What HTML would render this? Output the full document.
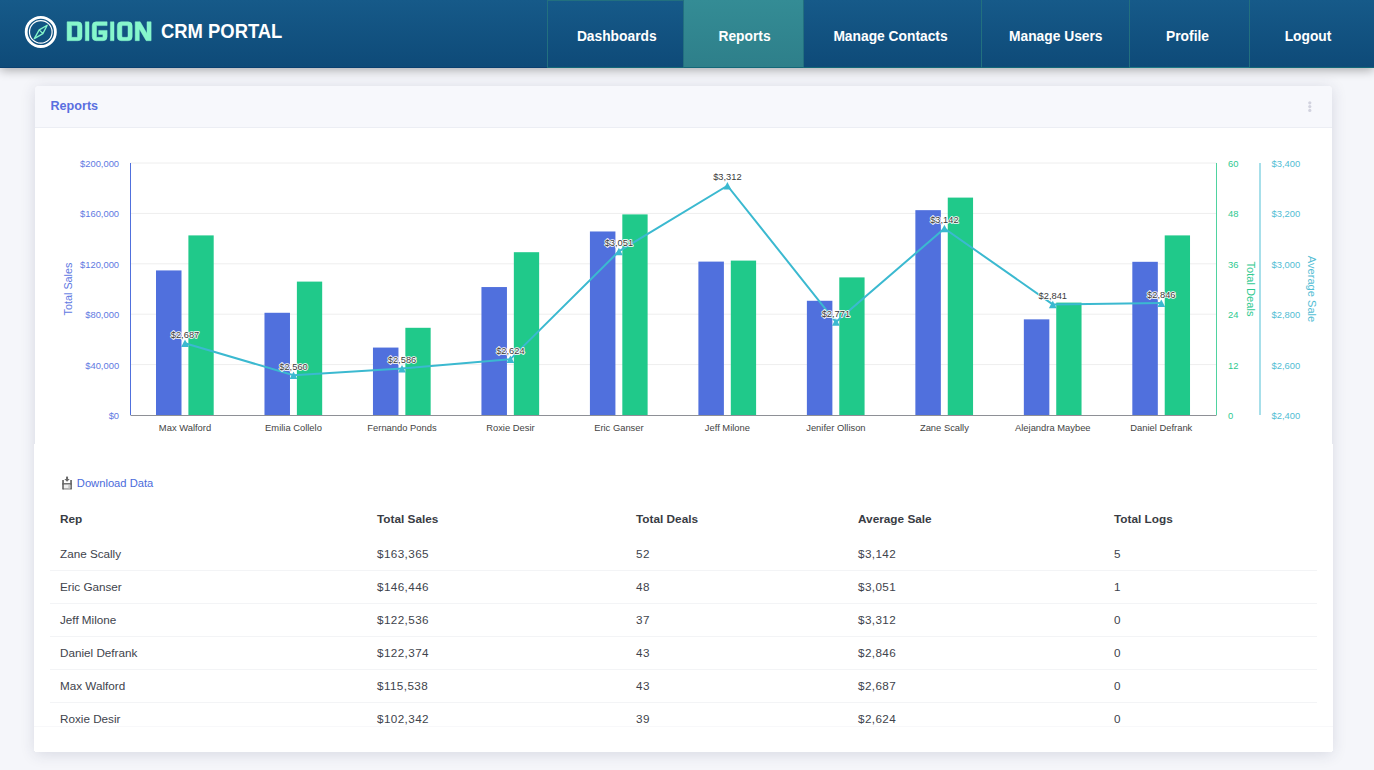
<!DOCTYPE html>
<html><head><meta charset="utf-8">
<style>
*{box-sizing:border-box;margin:0;padding:0}
html,body{width:1374px;height:770px;overflow:hidden;background:#f5f6fa;font-family:"Liberation Sans",sans-serif}
.hdr{position:absolute;left:0;top:0;width:1374px;height:68px;background:linear-gradient(#165a89,#0e4a78);box-shadow:inset 0 -1px #0a406f,0 2px 10px rgba(0,0,0,.33);z-index:5}
.logo{position:absolute;left:0;top:0}
.brand{position:absolute;left:65px;top:18px;font-size:28px;font-weight:bold;color:#85f6ca;line-height:1;transform-origin:0 0;transform:scaleX(.86);letter-spacing:0}
.crm{position:absolute;left:161px;top:21px;font-size:20.5px;font-weight:bold;color:#fff;line-height:1;transform-origin:0 0;transform:scaleX(.898)}
.nav{position:absolute;top:0;height:68px;border-left:1px solid #22707f;border-bottom:1px solid #136878;color:#fff;font-weight:bold;font-size:13.8px;text-align:center;line-height:1}
.nav span{position:absolute;left:0;right:0;top:30px}
.nav.act{background:linear-gradient(#348c95,#2e7f8a)}
.card{position:absolute;left:35px;top:86px;width:1297px;height:666px;background:#fff;border-radius:4px 4px 0 0;box-shadow:0 2px 15px rgba(40,50,90,.15);z-index:1}
.chd{position:absolute;left:0;top:0;width:100%;height:42px;background:#f7f8fc;border-bottom:1px solid #eceef4;border-radius:4px 4px 0 0}
.ttl{position:absolute;left:15.5px;top:13.5px;font-size:12.6px;font-weight:bold;color:#5a6fe0;line-height:1}
.keb{position:absolute;left:1272.5px;top:15px}
svg.chart{position:absolute;left:0;top:0;z-index:2}
svg text{font-family:"Liberation Sans",sans-serif}
.dl{position:absolute;left:76.8px;top:477.5px;font-size:11.2px;color:#4b6bdb;line-height:1;z-index:2}
.th,.td{position:absolute;line-height:1;z-index:2;white-space:nowrap}
.th{font-size:11.8px;font-weight:bold;color:#393c44}
.td{font-size:11.7px;color:#40434c}
.hr{position:absolute;left:50px;width:1267px;height:1px;background:#f3f4f6;z-index:2}
.ext{position:absolute;top:444px;height:307px;width:1px;background:#fff;z-index:1}
.clip{position:absolute;left:34px;top:726px;width:1299px;height:25px;background:#fff;z-index:3;border-top:1px solid #f8f8fa}
</style></head><body>
<div class="hdr">
<svg class="logo" width="80" height="68">
<circle cx="40.8" cy="31.9" r="14.6" fill="none" stroke="#fff" stroke-width="2.8"/>
<circle cx="40.8" cy="31.9" r="11.3" fill="none" stroke="#fff" stroke-width="1.2"/>
<path d="M34.3 38.6 L39.2 29.9 L47.2 25.3 L42.9 33.6 Z M39.2 29.9 L42.9 33.6" fill="none" stroke="#85f6ca" stroke-width="1.3" stroke-linejoin="round"/>
</svg>
<svg style="position:absolute;left:0;top:0" width="160" height="68"><g fill="#86f7cc" fill-rule="evenodd" stroke="#86f7cc" stroke-width="0.5" stroke-linejoin="round">
<path d="M67.1 21.8 H78 Q82 21.8 82 25.8 V36.7 Q82 40.7 78 40.7 H67.1 Z M71.6 25.6 H76.6 Q77.5 25.6 77.5 26.5 V36.4 Q77.5 37.3 76.6 37.3 H71.6 Z"/>
<path d="M85.3 21.8 H89 V40.7 H85.3 Z"/>
<path d="M92.2 25.8 Q92.2 21.8 96.2 21.8 H107.1 V25.6 H96.5 V37.3 H102.9 V34.4 H98.7 V30.4 H107.1 V36.7 Q107.1 40.7 103.1 40.7 H96.2 Q92.2 40.7 92.2 36.7 Z"/>
<path d="M110.4 21.8 H114 V40.7 H110.4 Z"/>
<path d="M117.3 25.8 Q117.3 21.8 121.3 21.8 H128.2 Q132.2 21.8 132.2 25.8 V36.7 Q132.2 40.7 128.2 40.7 H121.3 Q117.3 40.7 117.3 36.7 Z M121.9 26.6 Q121.9 25.6 122.9 25.6 H127 Q128 25.6 128 26.6 V36.3 Q128 37.3 127 37.3 H122.9 Q121.9 37.3 121.9 36.3 Z"/>
<path d="M135.2 21.8 H140.2 L147 33.6 V21.8 H151.1 V40.7 H146.2 L139.3 28.9 V40.7 H135.2 Z"/>
</g></svg>
<div class="crm">CRM PORTAL</div>
<div class="nav" style="left:547px;width:136px;border-top:1px solid #22707f"><i></i><span style="left:2.5px;top:29px">Dashboards</span></div>
<div class="nav act" style="left:683px;width:121px"><span style="left:1px">Reports</span></div>
<div class="nav" style="left:803px;width:178px"><span style="left:-4px">Manage Contacts</span></div>
<div class="nav" style="left:981px;width:148px"><span style="left:0.5px">Manage Users</span></div>
<div class="nav" style="left:1129px;width:121px;border-right:1px solid #22707f;border-bottom:1px solid #1f7a86"><span style="left:-4px">Profile</span></div>
<div class="nav" style="left:1250px;width:124px;border-left:none"><span style="left:-8px">Logout</span></div>
</div>
<div class="card">
<div class="chd"><div class="ttl">Reports</div>
<svg class="keb" width="4" height="14"><circle cx="1.8" cy="1.8" r="1.6" fill="#d2d3df"/><circle cx="1.8" cy="5.6" r="1.6" fill="#d2d3df"/><circle cx="1.8" cy="9.4" r="1.6" fill="#d2d3df"/></svg>
</div>
</div>
<svg class="chart" width="1374" height="770">
<line x1="130.5" y1="163.0" x2="1216.5" y2="163.0" stroke="#eeeeee" stroke-width="1"/>
<line x1="130.5" y1="213.4" x2="1216.5" y2="213.4" stroke="#eeeeee" stroke-width="1"/>
<line x1="130.5" y1="263.8" x2="1216.5" y2="263.8" stroke="#eeeeee" stroke-width="1"/>
<line x1="130.5" y1="314.2" x2="1216.5" y2="314.2" stroke="#eeeeee" stroke-width="1"/>
<line x1="130.5" y1="364.6" x2="1216.5" y2="364.6" stroke="#eeeeee" stroke-width="1"/>
<rect x="156.00" y="270.42" width="25.5" height="144.58" fill="#5070dd"/>
<rect x="188.40" y="235.40" width="25.3" height="179.60" fill="#20c98a"/>
<rect x="264.48" y="312.78" width="25.5" height="102.22" fill="#5070dd"/>
<rect x="296.88" y="281.60" width="25.3" height="133.40" fill="#20c98a"/>
<rect x="372.96" y="347.57" width="25.5" height="67.43" fill="#5070dd"/>
<rect x="405.36" y="327.80" width="25.3" height="87.20" fill="#20c98a"/>
<rect x="481.44" y="287.05" width="25.5" height="127.95" fill="#5070dd"/>
<rect x="513.84" y="252.20" width="25.3" height="162.80" fill="#20c98a"/>
<rect x="589.92" y="231.48" width="25.5" height="183.52" fill="#5070dd"/>
<rect x="622.32" y="214.40" width="25.3" height="200.60" fill="#20c98a"/>
<rect x="698.40" y="261.60" width="25.5" height="153.40" fill="#5070dd"/>
<rect x="730.80" y="260.60" width="25.3" height="154.40" fill="#20c98a"/>
<rect x="806.88" y="300.78" width="25.5" height="114.22" fill="#5070dd"/>
<rect x="839.28" y="277.40" width="25.3" height="137.60" fill="#20c98a"/>
<rect x="915.36" y="210.16" width="25.5" height="204.84" fill="#5070dd"/>
<rect x="947.76" y="197.60" width="25.3" height="217.40" fill="#20c98a"/>
<rect x="1023.84" y="319.35" width="25.5" height="95.65" fill="#5070dd"/>
<rect x="1056.24" y="302.60" width="25.3" height="112.40" fill="#20c98a"/>
<rect x="1132.32" y="261.81" width="25.5" height="153.19" fill="#5070dd"/>
<rect x="1164.72" y="235.40" width="25.3" height="179.60" fill="#20c98a"/>
<line x1="130.5" y1="163.0" x2="130.5" y2="415.0" stroke="#5070dd" stroke-width="1"/>
<line x1="1216.5" y1="163.0" x2="1216.5" y2="415.0" stroke="#4fd3a0" stroke-width="1"/>
<line x1="1260" y1="163.0" x2="1260" y2="415.0" stroke="#3bb9d0" stroke-opacity="0.45" stroke-width="2"/>
<line x1="130.5" y1="415.5" x2="1216.5" y2="415.5" stroke="#8e9096" stroke-width="1"/>
<text x="119.1" y="418.9" text-anchor="end" font-size="9.4" fill="#5f7ae2">$0</text>
<text x="1228" y="418.9" font-size="9.4" fill="#2ec990">0</text>
<text x="1271.5" y="418.9" font-size="9.4" fill="#52bdd4">$2,400</text>
<text x="119.1" y="368.5" text-anchor="end" font-size="9.4" fill="#5f7ae2">$40,000</text>
<text x="1228" y="368.5" font-size="9.4" fill="#2ec990">12</text>
<text x="1271.5" y="368.5" font-size="9.4" fill="#52bdd4">$2,600</text>
<text x="119.1" y="318.1" text-anchor="end" font-size="9.4" fill="#5f7ae2">$80,000</text>
<text x="1228" y="318.1" font-size="9.4" fill="#2ec990">24</text>
<text x="1271.5" y="318.1" font-size="9.4" fill="#52bdd4">$2,800</text>
<text x="119.1" y="267.7" text-anchor="end" font-size="9.4" fill="#5f7ae2">$120,000</text>
<text x="1228" y="267.7" font-size="9.4" fill="#2ec990">36</text>
<text x="1271.5" y="267.7" font-size="9.4" fill="#52bdd4">$3,000</text>
<text x="119.1" y="217.3" text-anchor="end" font-size="9.4" fill="#5f7ae2">$160,000</text>
<text x="1228" y="217.3" font-size="9.4" fill="#2ec990">48</text>
<text x="1271.5" y="217.3" font-size="9.4" fill="#52bdd4">$3,200</text>
<text x="119.1" y="166.9" text-anchor="end" font-size="9.4" fill="#5f7ae2">$200,000</text>
<text x="1228" y="166.9" font-size="9.4" fill="#2ec990">60</text>
<text x="1271.5" y="166.9" font-size="9.4" fill="#52bdd4">$3,400</text>
<text x="185.0" y="430.8" text-anchor="middle" font-size="9.4" fill="#444">Max Walford</text>
<text x="293.5" y="430.8" text-anchor="middle" font-size="9.4" fill="#444">Emilia Collelo</text>
<text x="402.0" y="430.8" text-anchor="middle" font-size="9.4" fill="#444">Fernando Ponds</text>
<text x="510.4" y="430.8" text-anchor="middle" font-size="9.4" fill="#444">Roxie Desir</text>
<text x="618.9" y="430.8" text-anchor="middle" font-size="9.4" fill="#444">Eric Ganser</text>
<text x="727.4" y="430.8" text-anchor="middle" font-size="9.4" fill="#444">Jeff Milone</text>
<text x="835.9" y="430.8" text-anchor="middle" font-size="9.4" fill="#444">Jenifer Ollison</text>
<text x="944.4" y="430.8" text-anchor="middle" font-size="9.4" fill="#444">Zane Scally</text>
<text x="1052.8" y="430.8" text-anchor="middle" font-size="9.4" fill="#444">Alejandra Maybee</text>
<text x="1161.3" y="430.8" text-anchor="middle" font-size="9.4" fill="#444">Daniel Defrank</text>
<text transform="translate(71.6 289) rotate(-90)" text-anchor="middle" font-size="10.8" fill="#5f7ae2">Total Sales</text>
<text transform="translate(1247.2 289) rotate(90)" text-anchor="middle" font-size="11.1" fill="#2ec990">Total Deals</text>
<text transform="translate(1307.8 289) rotate(90)" text-anchor="middle" font-size="11.1" fill="#52bdd4">Average Sale</text>
<polyline points="185.0,343.2 293.5,375.2 402.0,368.6 510.4,359.1 618.9,251.4 727.4,185.7 835.9,322.0 944.4,228.5 1052.8,304.4 1161.3,303.1" fill="none" stroke="#3bb9d0" stroke-width="2"/>
<path d="M185.0 339.5 L188.9 347.0 L181.1 347.0Z" fill="#3bb9d0"/>
<path d="M293.5 371.5 L297.4 379.0 L289.6 379.0Z" fill="#3bb9d0"/>
<path d="M402.0 364.9 L405.9 372.4 L398.1 372.4Z" fill="#3bb9d0"/>
<path d="M510.4 355.4 L514.3 362.9 L506.5 362.9Z" fill="#3bb9d0"/>
<path d="M618.9 247.7 L622.8 255.2 L615.0 255.2Z" fill="#3bb9d0"/>
<path d="M727.4 182.0 L731.3 189.5 L723.5 189.5Z" fill="#3bb9d0"/>
<path d="M835.9 318.3 L839.8 325.8 L832.0 325.8Z" fill="#3bb9d0"/>
<path d="M944.4 224.8 L948.3 232.3 L940.5 232.3Z" fill="#3bb9d0"/>
<path d="M1052.8 300.7 L1056.7 308.2 L1048.9 308.2Z" fill="#3bb9d0"/>
<path d="M1161.3 299.4 L1165.2 306.9 L1157.4 306.9Z" fill="#3bb9d0"/>
<text x="185.0" y="337.9" text-anchor="middle" font-size="9.3" fill="#3a3a3a" stroke="#fff" stroke-width="1.6" paint-order="stroke" stroke-linejoin="round">$2,687</text>
<text x="293.5" y="369.9" text-anchor="middle" font-size="9.3" fill="#3a3a3a" stroke="#fff" stroke-width="1.6" paint-order="stroke" stroke-linejoin="round">$2,560</text>
<text x="402.0" y="363.3" text-anchor="middle" font-size="9.3" fill="#3a3a3a" stroke="#fff" stroke-width="1.6" paint-order="stroke" stroke-linejoin="round">$2,586</text>
<text x="510.4" y="353.8" text-anchor="middle" font-size="9.3" fill="#3a3a3a" stroke="#fff" stroke-width="1.6" paint-order="stroke" stroke-linejoin="round">$2,624</text>
<text x="618.9" y="246.1" text-anchor="middle" font-size="9.3" fill="#3a3a3a" stroke="#fff" stroke-width="1.6" paint-order="stroke" stroke-linejoin="round">$3,051</text>
<text x="727.4" y="180.4" text-anchor="middle" font-size="9.3" fill="#3a3a3a" stroke="#fff" stroke-width="1.6" paint-order="stroke" stroke-linejoin="round">$3,312</text>
<text x="835.9" y="316.7" text-anchor="middle" font-size="9.3" fill="#3a3a3a" stroke="#fff" stroke-width="1.6" paint-order="stroke" stroke-linejoin="round">$2,771</text>
<text x="944.4" y="223.2" text-anchor="middle" font-size="9.3" fill="#3a3a3a" stroke="#fff" stroke-width="1.6" paint-order="stroke" stroke-linejoin="round">$3,142</text>
<text x="1052.8" y="299.1" text-anchor="middle" font-size="9.3" fill="#3a3a3a" stroke="#fff" stroke-width="1.6" paint-order="stroke" stroke-linejoin="round">$2,841</text>
<text x="1161.3" y="297.8" text-anchor="middle" font-size="9.3" fill="#3a3a3a" stroke="#fff" stroke-width="1.6" paint-order="stroke" stroke-linejoin="round">$2,846</text>
</svg>
<svg style="position:absolute;left:58px;top:473px;z-index:2" width="18" height="20" viewBox="0 0 18 20">
<g fill="#676767"><rect x="4.2" y="7" width="1.7" height="9.4"/><rect x="12.2" y="7" width="1.7" height="9.2"/><rect x="4.2" y="10.1" width="9.7" height="1.6"/><rect x="4.8" y="15.3" width="8.9" height="1.1"/><rect x="8.05" y="3.6" width="2" height="2.8"/><path d="M6.4 6.1 L11.7 6.1 L9.05 8.7 Z"/></g>
<rect x="5.9" y="11.7" width="6.3" height="3.6" fill="#f0f0f0"/><rect x="10.3" y="12.2" width="1.9" height="3.1" fill="#c8c8c8"/>
</svg>
<div class="dl">Download Data</div>
<div class="th" style="left:60px;top:513.8px">Rep</div>
<div class="th" style="left:377px;top:513.8px">Total Sales</div>
<div class="th" style="left:636px;top:513.8px">Total Deals</div>
<div class="th" style="left:858px;top:513.8px">Average Sale</div>
<div class="th" style="left:1114px;top:513.8px">Total Logs</div>
<div class="td" style="left:60px;top:548.4px;">Zane Scally</div>
<div class="td" style="left:377px;top:548.4px;letter-spacing:0.4px;">$163,365</div>
<div class="td" style="left:636px;top:548.4px;letter-spacing:0.4px;">52</div>
<div class="td" style="left:858px;top:548.4px;letter-spacing:0.4px;">$3,142</div>
<div class="td" style="left:1114px;top:548.4px;letter-spacing:0.4px;">5</div>
<div class="hr" style="top:570px"></div>
<div class="td" style="left:60px;top:581.4px;">Eric Ganser</div>
<div class="td" style="left:377px;top:581.4px;letter-spacing:0.4px;">$146,446</div>
<div class="td" style="left:636px;top:581.4px;letter-spacing:0.4px;">48</div>
<div class="td" style="left:858px;top:581.4px;letter-spacing:0.4px;">$3,051</div>
<div class="td" style="left:1114px;top:581.4px;letter-spacing:0.4px;">1</div>
<div class="hr" style="top:603px"></div>
<div class="td" style="left:60px;top:614.4px;">Jeff Milone</div>
<div class="td" style="left:377px;top:614.4px;letter-spacing:0.4px;">$122,536</div>
<div class="td" style="left:636px;top:614.4px;letter-spacing:0.4px;">37</div>
<div class="td" style="left:858px;top:614.4px;letter-spacing:0.4px;">$3,312</div>
<div class="td" style="left:1114px;top:614.4px;letter-spacing:0.4px;">0</div>
<div class="hr" style="top:636px"></div>
<div class="td" style="left:60px;top:647.4px;">Daniel Defrank</div>
<div class="td" style="left:377px;top:647.4px;letter-spacing:0.4px;">$122,374</div>
<div class="td" style="left:636px;top:647.4px;letter-spacing:0.4px;">43</div>
<div class="td" style="left:858px;top:647.4px;letter-spacing:0.4px;">$2,846</div>
<div class="td" style="left:1114px;top:647.4px;letter-spacing:0.4px;">0</div>
<div class="hr" style="top:669px"></div>
<div class="td" style="left:60px;top:680.4px;">Max Walford</div>
<div class="td" style="left:377px;top:680.4px;letter-spacing:0.4px;">$115,538</div>
<div class="td" style="left:636px;top:680.4px;letter-spacing:0.4px;">43</div>
<div class="td" style="left:858px;top:680.4px;letter-spacing:0.4px;">$2,687</div>
<div class="td" style="left:1114px;top:680.4px;letter-spacing:0.4px;">0</div>
<div class="hr" style="top:702px"></div>
<div class="td" style="left:60px;top:713.4px;">Roxie Desir</div>
<div class="td" style="left:377px;top:713.4px;letter-spacing:0.4px;">$102,342</div>
<div class="td" style="left:636px;top:713.4px;letter-spacing:0.4px;">39</div>
<div class="td" style="left:858px;top:713.4px;letter-spacing:0.4px;">$2,624</div>
<div class="td" style="left:1114px;top:713.4px;letter-spacing:0.4px;">0</div>
<div class="hr" style="top:735px"></div>
<div class="clip"></div>
<div class="ext" style="left:34px"></div><div class="ext" style="left:1332px"></div>
</body></html>
